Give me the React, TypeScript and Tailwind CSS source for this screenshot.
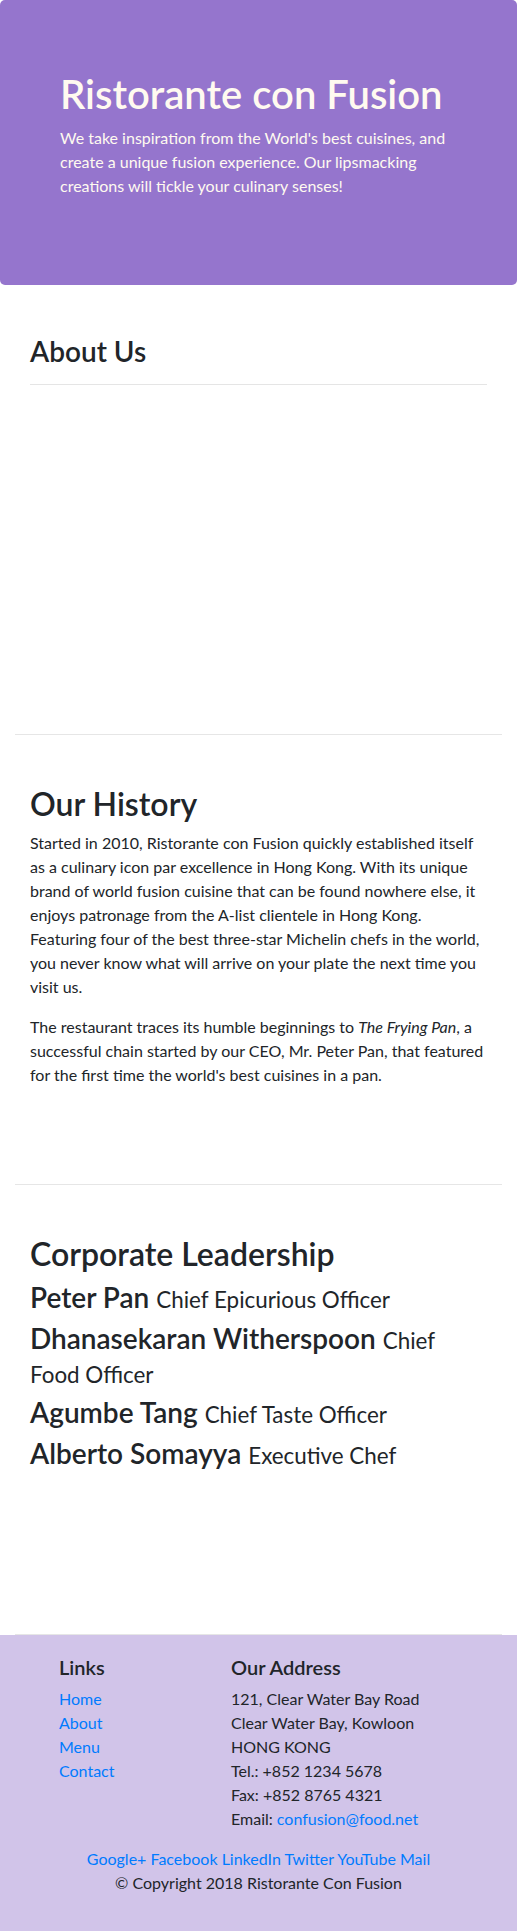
import React from "react";

export default function App() {
  return (
    <div className="font-['Lato',sans-serif] text-[#212529] text-[16px] leading-[24px] bg-white">
      {/* Jumbotron */}
      <header className="bg-[#9575cd] rounded-[5px] pt-[70px] pb-[87px] px-[60px] text-[#fffaf0]">
        <h1 className="text-[40px] leading-[48px] font-semibold mb-[8px]">Ristorante con Fusion</h1>
        <p>
          We take inspiration from the World's best cuisines, and create a unique fusion experience. Our lipsmacking
          creations will tickle your culinary senses!
        </p>
      </header>

      <div className="px-[15px]">
        {/* About Us */}
        <section className="border-b border-[#e6e6e6] pt-[50px] px-[15px] h-[450px]">
          <h3 className="text-[28px] leading-[33.6px] font-semibold">About Us</h3>
          <hr className="mt-[15px] border-t border-[#e5e5e5]" />
        </section>

        {/* Our History */}
        <section className="border-b border-[#e6e6e6] pt-[50px] px-[15px] h-[450px]">
          <h2 className="text-[32px] leading-[38.4px] font-semibold mb-[8px]">Our History</h2>
          <p className="mb-[16px]">
            Started in 2010, Ristorante con Fusion quickly established itself as a culinary icon par excellence in Hong
            Kong. With its unique brand of world fusion cuisine that can be found nowhere else, it enjoys patronage from
            the A-list clientele in Hong Kong. Featuring four of the best three-star Michelin chefs in the world, you
            never know what will arrive on your plate the next time you visit us.
          </p>
          <p>
            The restaurant traces its humble beginnings to <em>The Frying Pan</em>, a successful chain started by our
            CEO, Mr. Peter Pan, that featured for the first time the world's best cuisines in a pan.
          </p>
        </section>

        {/* Corporate Leadership */}
        <section className="border-b border-[#e6e6e6] pt-[50px] px-[15px] h-[450px]">
          <h2 className="text-[32px] leading-[38.4px] font-semibold mb-[8px]">Corporate Leadership</h2>
          <div className="flex flex-col gap-[7px]">
            <h3 className="text-[28px] leading-[33.6px] font-semibold">
              Peter Pan <small className="text-[80%] leading-none font-normal">Chief Epicurious Officer</small>
            </h3>
            <h3 className="text-[28px] leading-[33.6px] font-semibold">
              Dhanasekaran Witherspoon{" "}
              <small className="text-[80%] leading-none font-normal">Chief Food Officer</small>
            </h3>
            <h3 className="text-[28px] leading-[33.6px] font-semibold">
              Agumbe Tang <small className="text-[80%] leading-none font-normal">Chief Taste Officer</small>
            </h3>
            <h3 className="text-[28px] leading-[33.6px] font-semibold">
              Alberto Somayya <small className="text-[80%] leading-none font-normal">Executive Chef</small>
            </h3>
          </div>
        </section>
      </div>

      {/* Footer */}
      <footer className="bg-[#d1c4e9] pt-[20px] pb-[20px]">
        <div className="flex">
          <div className="w-[215px] pl-[59px]">
            <h5 className="text-[20px] leading-[24px] font-semibold mb-[8px]">Links</h5>
            <ul className="flex flex-col">
              <li><a className="text-[#007bff]" href="#">Home</a></li>
              <li><a className="text-[#007bff]" href="#">About</a></li>
              <li><a className="text-[#007bff]" href="#">Menu</a></li>
              <li><a className="text-[#007bff]" href="#">Contact</a></li>
            </ul>
          </div>
          <div className="pl-[16px]">
            <h5 className="text-[20px] leading-[24px] font-semibold mb-[8px]">Our Address</h5>
            <address className="not-italic mb-[16px]">
              121, Clear Water Bay Road<br />
              Clear Water Bay, Kowloon<br />
              HONG KONG<br />
              Tel.: +852 1234 5678<br />
              Fax: +852 8765 4321<br />
              Email: <a className="text-[#007bff]" href="#">confusion@food.net</a>
            </address>
          </div>
        </div>
        <div className="text-center text-[#007bff]">
          <a href="#">Google+</a> <a href="#">Facebook</a> <a href="#">LinkedIn</a> <a href="#">Twitter</a>{" "}
          <a href="#">YouTube</a> <a href="#">Mail</a>
        </div>
        <p className="text-center mb-[16px]">© Copyright 2018 Ristorante Con Fusion</p>
      </footer>
    </div>
  );
}
